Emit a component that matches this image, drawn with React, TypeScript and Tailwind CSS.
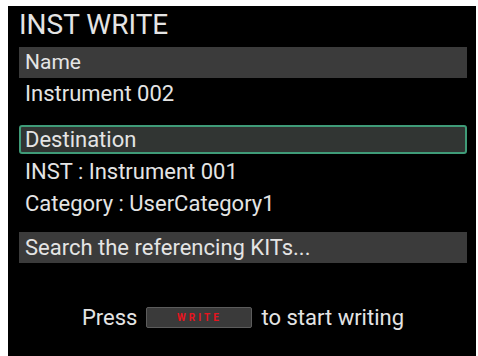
export default function App() {
  return (
    <div className="w-[478px] h-[356px] bg-white pl-[8px] pt-[6px] pr-[2px]">
      <div className="h-full bg-black text-[#e4e4e4] font-['Roboto',sans-serif] pl-[11px] pr-[9px] flex flex-col">
        {/* Title */}
        <h1 className="text-[28px] leading-[34px] mt-[2px]">INST WRITE</h1>

        {/* Name */}
        <div className="mt-[5px] h-[31px] bg-[#3b3b3b] flex items-center px-[6px] text-[21px]">Name</div>
        <div className="h-[31px] flex items-center px-[6px] text-[22px]">Instrument 002</div>

        {/* Destination */}
        <div className="mt-[16px] h-[29px] bg-[#313533] border-2 border-[#3f9b78] rounded-[3px] flex items-center px-[4px] text-[22px]">
          Destination
        </div>
        <div className="h-[34px] flex items-center px-[6px] text-[22px]">INST : Instrument 001</div>
        <div className="h-[30px] flex items-center px-[6px] text-[22px]">Category : UserCategory1</div>

        {/* Search */}
        <div className="mt-[14px] h-[31px] bg-[#3b3b3b] flex items-center px-[6px] text-[22px]">
          Search the referencing KITs...
        </div>

        {/* Footer */}
        <div className="mt-[44px] h-[21px] flex items-center justify-center gap-[9px] text-[22px]">
          <span>Press</span>
          <span className="w-[106px] h-[21px] bg-[#3a3a3a] border border-[#5c5c5c] rounded-[2px] flex items-center justify-center text-[10px] font-bold text-[#e8141e] tracking-[3px]">
            WRITE
          </span>
          <span>to start writing</span>
        </div>
      </div>
    </div>
  );
}
